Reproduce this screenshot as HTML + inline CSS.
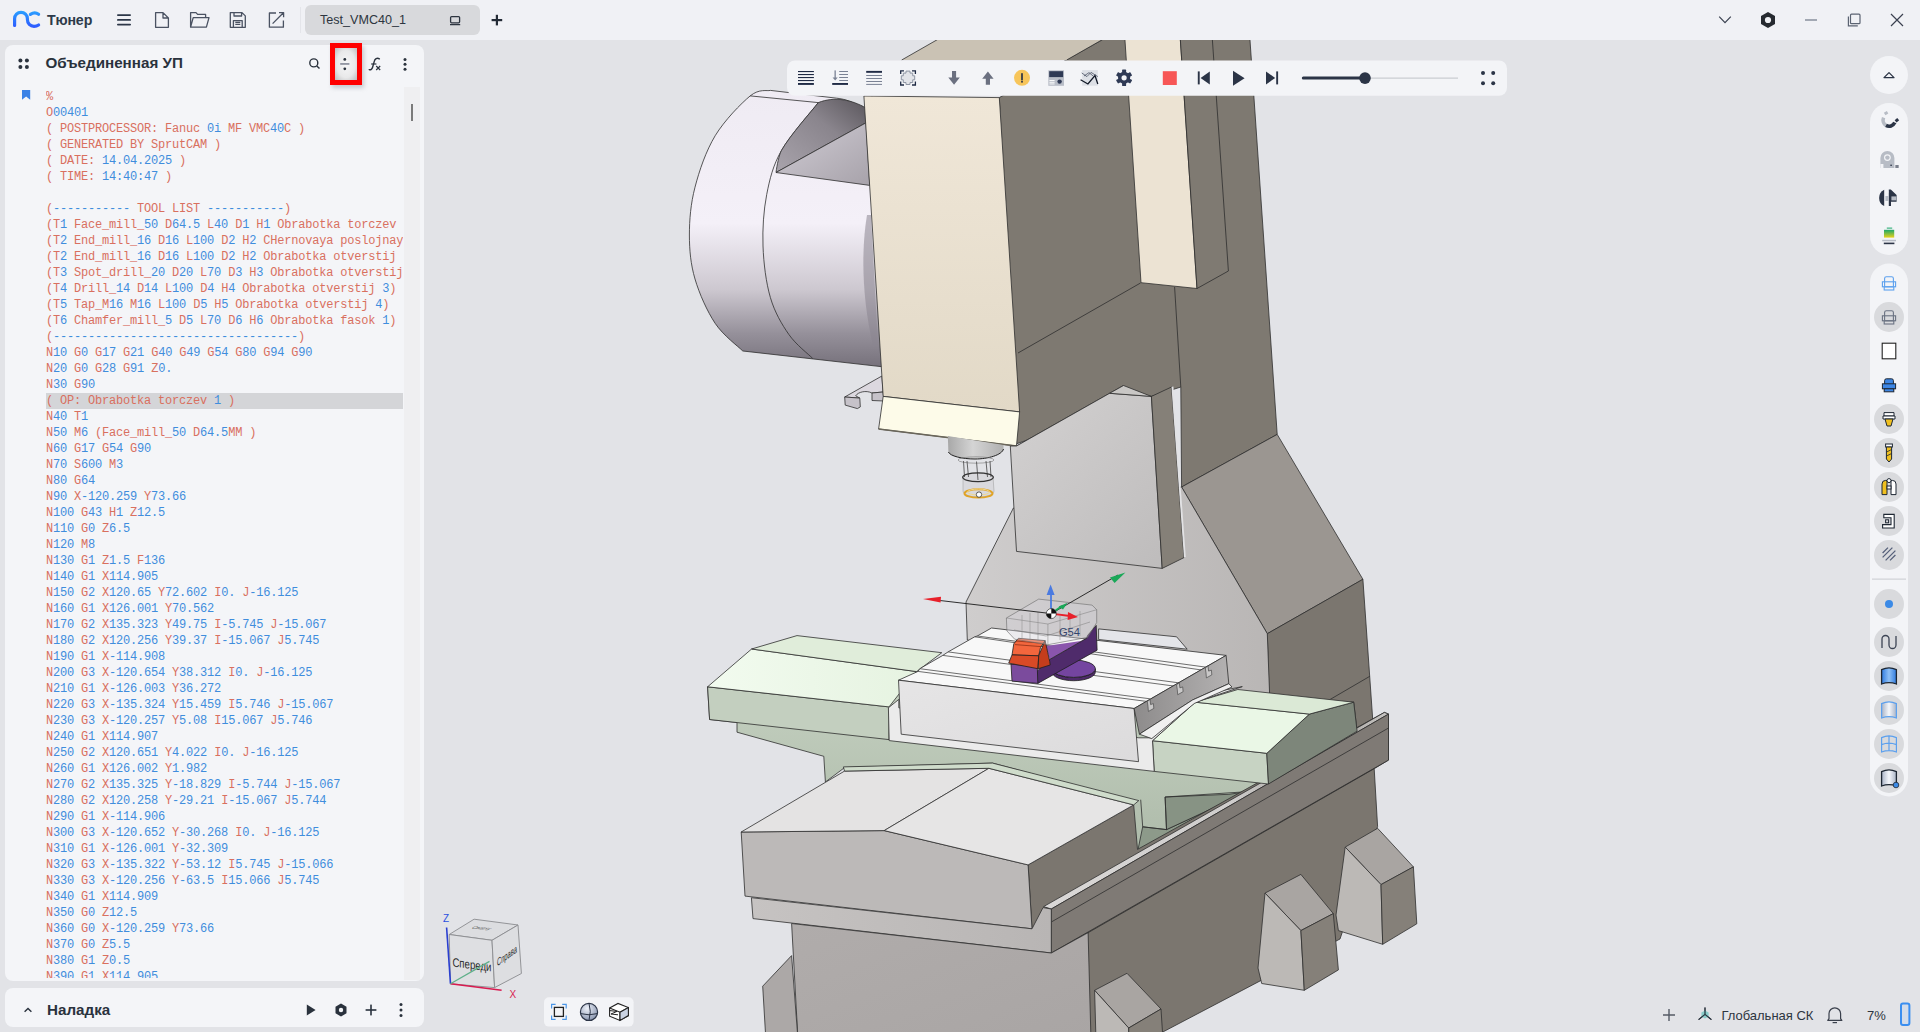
<!DOCTYPE html>
<html><head><meta charset="utf-8">
<style>
*{box-sizing:border-box;margin:0;padding:0}
html,body{width:1920px;height:1032px;overflow:hidden;background:#e2e3e7;font-family:"Liberation Sans",sans-serif;position:relative}
.abs{position:absolute}
#top{left:0;top:0;width:1920px;height:40px;background:#f0f1f5}
#vp{left:0;top:40px;width:1920px;height:992px;background:#e2e3e7;overflow:hidden}
#panel{left:5px;top:45px;width:419px;height:936px;background:#f4f5f8;border-radius:8px;overflow:hidden}
#code{position:absolute;left:41px;top:44px;width:357px;height:889px;overflow:hidden;font-family:"Liberation Mono",monospace;font-size:12px;letter-spacing:-0.2px;line-height:16px;color:#d9705f}
#code div{height:16px;white-space:pre}
#code b{font-weight:normal;color:#3f8ddd}
#code .hl{background:#d4d5d8}
#bot{left:5px;top:988px;width:419px;height:39px;background:#f4f5f8;border-radius:8px}
.title{font-weight:bold;color:#2a323d}
</style></head><body>
<div id="top" class="abs">
<svg class="abs" style="left:0;top:0" width="1920" height="40" viewBox="0 0 1920 40">
<defs><linearGradient id="lg" gradientUnits="userSpaceOnUse" x1="0" y1="11" x2="0" y2="28"><stop offset="0" stop-color="#29a0ff"/><stop offset="1" stop-color="#2e56ff"/></linearGradient></defs>
<g fill="none" stroke="url(#lg)" stroke-width="3.2" stroke-linecap="round">
<path d="M14.6 25.5 V18.7 A6.4 6.4 0 0 1 27.4 18.7 V19.6 A6.6 6.6 0 0 0 34 26.3 C36 26.3 37.4 25.8 38.6 25"/>
<path d="M30.4 14.3 C33 12.7 36.4 12.7 38.6 14.3"/>
</g>
<g fill="#2d3748"><rect x="117" y="14.2" width="14" height="1.8" rx=".9"/><rect x="117" y="19" width="14" height="1.8" rx=".9"/><rect x="117" y="23.7" width="14" height="1.8" rx=".9"/></g>
<g fill="none" stroke="#4a5262" stroke-width="1.3" stroke-linejoin="round">
<path d="M155.6 12.6 H163 L168.4 18 V27.3 H155.6 Z M163 12.6 V18 H168.4"/>
<path d="M190.6 27.2 V12.6 H196 L197.6 14.4 H205.6 V17.2 M190.6 27.2 L193.2 17.6 H209 L206.4 27.2 Z"/>
<path d="M230.3 12.6 H242 L245.3 15.9 V27.3 H230.3 Z M234 12.6 V16 H241.6 V12.6 M233.4 27.3 V20.6 H242.2 V27.3 M235.3 22.4 H240.3 M235.3 24.3 H240.3"/>
<path d="M276 13 H269.4 V27.2 H283.4 V20.4 M272.6 23.6 L283.4 12.8 M279 12.6 H283.6 V17.2"/>
</g>
</svg>
<div class="abs" style="left:47px;top:12px;font-size:14.2px;font-weight:bold;color:#2d3a4a;letter-spacing:-0.1px">Тюнер</div>
<div class="abs" style="left:300px;top:7px;width:1px;height:26px;background:#e4e5ea"></div>
<div class="abs" style="left:305px;top:5px;width:175px;height:30px;background:#d8d9dc;border-radius:6px"></div>
<div class="abs" style="left:320px;top:13px;font-size:12.6px;color:#2d3540">Test_VMC40_1</div>
<svg class="abs" style="left:0;top:0" width="1920" height="40" viewBox="0 0 1920 40">
<g fill="none" stroke="#2d3540" stroke-width="1.3"><rect x="450.6" y="16.6" width="9" height="6.2" rx="1"/><path d="M450 24.6 H460.2"/></g>
<g fill="#232b36"><rect x="491.6" y="19" width="10.6" height="2.2"/><rect x="495.8" y="14.8" width="2.2" height="10.6"/></g>
<path d="M1719.2 16.6 L1725 22.6 L1730.8 16.6" fill="none" stroke="#3a4150" stroke-width="1.2"/>
<path d="M1768 12 L1775 16 V24 L1768 28 L1761 24 V16 Z" fill="#262a30"/><circle cx="1768" cy="20" r="3.1" fill="#f0f1f5"/>
<rect x="1805" y="19.2" width="12" height="1.6" fill="#8f96a3"/>
<g fill="none" stroke="#5b6372" stroke-width="1.2"><rect x="1850.5" y="14.2" width="9.5" height="9.5" rx="1"/><path d="M1848.4 16.4 V25.8 H1857.8"/></g>
<path d="M1891 14 L1903 26 M1903 14 L1891 26" stroke="#3a4150" stroke-width="1.2"/>
</svg>

</div>
<div id="vp" class="abs">
<svg class="abs" style="left:0;top:0" width="1920" height="992" viewBox="0 40 1920 992">
<defs>
<linearGradient id="gmot" gradientUnits="userSpaceOnUse" x1="0" y1="90" x2="0" y2="367"><stop offset="0" stop-color="#efebf3"/><stop offset=".48" stop-color="#f4f0f8"/><stop offset=".72" stop-color="#cdc8d0"/><stop offset=".88" stop-color="#95909a"/><stop offset="1" stop-color="#76717b"/></linearGradient>
<linearGradient id="gtri" x1="0" y1="0" x2="1" y2="1"><stop offset="0" stop-color="#d2ced6"/><stop offset="1" stop-color="#a7a2aa"/></linearGradient>
<linearGradient id="gmot2" x1="0" y1="0" x2="0" y2="1"><stop offset="0" stop-color="#f6f2fa"/><stop offset=".5" stop-color="#ebe7f0"/><stop offset=".85" stop-color="#a29da7"/><stop offset="1" stop-color="#7a7580"/></linearGradient>
<linearGradient id="gwedge" x1="0" y1="1" x2="1" y2="0"><stop offset="0" stop-color="#a9a4ac"/><stop offset=".6" stop-color="#8a858d"/><stop offset="1" stop-color="#5a565c"/></linearGradient>
<linearGradient id="ghead" x1="0" y1="0" x2="0" y2="1"><stop offset="0" stop-color="#f0e7d8"/><stop offset="1" stop-color="#e2d9c7"/></linearGradient>
<linearGradient id="gspin" x1="0" y1="0" x2="1" y2="0"><stop offset="0" stop-color="#a8a8a8"/><stop offset=".45" stop-color="#d4d4d4"/><stop offset="1" stop-color="#b0b0b0"/></linearGradient>
<linearGradient id="gtabf" x1="0" y1="0" x2="1" y2="1"><stop offset="0" stop-color="#e6e5e6"/><stop offset="1" stop-color="#dcdbdc"/></linearGradient>
<linearGradient id="gtabr" x1="0" y1="0" x2="1" y2="0"><stop offset="0" stop-color="#8d8b8b"/><stop offset="1" stop-color="#b3b1b1"/></linearGradient>
<linearGradient id="gund" gradientUnits="userSpaceOnUse" x1="0" y1="690" x2="0" y2="850"><stop offset="0" stop-color="#c3cfbf"/><stop offset="1" stop-color="#aebbaa"/></linearGradient>
<linearGradient id="gstrip" x1="0" y1="0" x2="1" y2="0"><stop offset="0" stop-color="#c6c3c2"/><stop offset="1" stop-color="#b8b5b4"/></linearGradient>
<linearGradient id="gbmain" x1="0" y1="0" x2="1" y2="1"><stop offset="0" stop-color="#b0acab"/><stop offset="1" stop-color="#a9a5a4"/></linearGradient>
<linearGradient id="grailtop" gradientUnits="userSpaceOnUse" x1="1043" y1="0" x2="1388" y2="0"><stop offset="0" stop-color="#dad8d7"/><stop offset=".55" stop-color="#cfcdcc"/><stop offset=".8" stop-color="#9d9994"/><stop offset="1" stop-color="#c8c6c4"/></linearGradient>
<linearGradient id="gram" x1="0" y1="0" x2="1" y2="1"><stop offset="0" stop-color="#d3d1d1"/><stop offset="1" stop-color="#bebcbc"/></linearGradient>
<linearGradient id="gcolf" x1="0" y1="0" x2="1" y2="0"><stop offset="0" stop-color="#cfcdcd"/><stop offset="1" stop-color="#b9b6b5"/></linearGradient>
<linearGradient id="gbasefront" x1="0" y1="0" x2="0" y2="1"><stop offset="0" stop-color="#bdbaba"/><stop offset="1" stop-color="#b1aeae"/></linearGradient>
<linearGradient id="ggreen" x1="0" y1="0" x2="1" y2="0"><stop offset="0" stop-color="#f2fbef"/><stop offset="1" stop-color="#e6f3e1"/></linearGradient>
</defs>
<g stroke="#2e2e2e" stroke-width=".8" stroke-linejoin="round">
<!-- column big dark -->
<path d="M999.3 97.6 L1119.5 30 H1249.3 L1277.2 434.4 L1181.6 487 L1180.8 387 L1151.4 396.4 L1010.3 446 L1016.5 446 Z" fill="#7e7971"/>
<path d="M1016.5 446 L1123.5 385.5" fill="none"/>

<path d="M1018 353 L1140.5 283" fill="none"/>
<path d="M1174.6 287 L1180.8 387" fill="none"/>
<path d="M901.7 60 L954.2 30 H1119.2 L1066.7 60 Z" fill="#cac2b4" stroke="none"/>
<path d="M901.7 60 L954.2 30 M1066.7 60 L1119.2 30" fill="none"/>
<!-- column slope faces -->
<path d="M1181.6 487 L1277.2 434.4 L1362.9 579.3 L1267.3 633.7 Z" fill="#9b9691"/>
<path d="M1267.3 633.7 L1362.9 579.3 L1374.5 745 L1270.6 745 Z" fill="#7b766f"/>
<path d="M1300 717 L1369.8 676.3" fill="none"/>
<!-- column front light -->
<path d="M1013.4 508 L1181.6 487 L1267.3 633.7 L1270.6 720 L967.3 640 L966 602 Z" fill="url(#gcolf)"/>
<!-- rail -->
<path d="M1124.3 30 H1179.7 L1197 288.5 L1141 282.7 Z" fill="#ece3d3"/>
<path d="M1179.7 30 H1211.7 L1228.4 271 L1197 288.5 Z" fill="#7f7a72"/>
<!-- motor -->
<path d="M770.4 90.4 C767.0 91.3 759.4 88.4 750.2 95.9 C741.0 103.5 724.4 120.5 715.2 135.7 C706.0 150.9 699.3 170.6 695.0 187.2 C690.7 203.8 689.4 219.7 689.4 235.0 C689.4 250.3 690.7 264.3 695.0 279.0 C699.3 293.7 707.2 311.4 715.2 323.4 C723.2 335.4 738.2 346.4 742.8 351.0 L882.7 366.8 L872 96 L866 111.8 C855 102 845 99 836.7 98.2 Z" fill="url(#gmot)"/>
<path d="M818.3 102.6 C812.2 110.6 790.1 135.1 781.5 150.4 C772.9 165.7 769.8 178.7 766.7 194.6 C763.6 210.5 762.4 228.8 763.0 246.0 C763.6 263.2 766.1 282.9 770.4 297.6 C774.7 312.3 781.8 324.3 788.8 334.4 C795.8 344.5 808.7 354.4 812.7 358.4" fill="none"/>
<path d="M818.3 102.6 C812.2 110.6 790.1 135.1 781.5 150.4 C779 155 777 165 776 172.5 L866 122.8 L866 108 C852 100 835 96 818.3 102.6 Z" fill="url(#gwedge)"/>
<path d="M776 172.5 L866 122.8 L869.8 185.4 Z" fill="url(#gtri)"/>
<path d="M750.2 95.9 L818.3 102.6" fill="none"/>
<path d="M867 215 C861 250 862 300 873 345 L878 345 L871 215 Z" fill="#8a8590" opacity=".55" stroke="none"/>
<!-- bracket -->
<path d="M844.7 397 L881.9 376 L883 392 L872 393 C866 390 858 392 855.7 395.8 L859.8 398.1 Z" fill="#dcd8df"/>
<path d="M844.7 397 L859.8 398.1 L860.3 406.9 L857.4 408.6 L845.2 405.1 Z" fill="#c6c2c9"/>
<path d="M872 393 L883 392 L884.2 401 L872 400.5 Z" fill="#c6c2c9"/>
<!-- head front -->
<path d="M863.9 96 L999.3 97.6 L1019.6 411.9 L883.2 396.4 Z" fill="url(#ghead)"/>
<path d="M883.2 396.4 L1019.6 411.9 L1016.5 446 L878.6 429 Z" fill="#fdfbe9"/>
<path d="M878.6 429 L1016.5 446" stroke-width="1.6" stroke="#6a665a"/>
<!-- ram -->
<path d="M1010.3 446 L1016.5 446 L1109.6 393.3 L1151.4 396.4 L1162.2 568.4 L1016.5 551.4 Z" fill="url(#gram)"/>
<path d="M1151.4 396.4 L1171.5 387 L1184 557.6 L1162.2 568.4 Z" fill="#858078"/>
<path d="M1109.6 393.3 L1123.5 385.5 L1151.4 396.4 Z" fill="#c9c7c5"/>
<path d="M1171.5 387 L1173.4 386.4 L1185.8 557 L1184 557.6 Z" fill="#e2e2e4" stroke="none"/>

<!-- spindle -->
<path d="M947.8 436 L1003.5 445 L1003.5 449 C1002 455 988 459 975 459 C962 459 950 456 948.4 452 Z" fill="url(#gspin)" stroke="none"/>
<path d="M948.4 452 C950 456 962 459 975 459 C988 459 1002 455 1003.5 449" fill="none" stroke="#222" stroke-width="1"/>
</g>
<path d="M963 477 C963 472 993 472 993 477 L994 491 C994 499 963 499 963 491 Z" fill="#d2d2d6" fill-opacity=".55" stroke="#999" stroke-width=".5"/>
<g fill="none" stroke="#444" stroke-width=".8">
<ellipse cx="976" cy="460" rx="18" ry="3.2" stroke="#777" stroke-width=".6"/>
<path d="M963.5 461 L964.5 477 M967 461 L968.5 477 M976.5 461.5 L978 480 M986 461 L987.5 477 M990 461 L991 477"/>
<ellipse cx="978" cy="477.2" rx="15.3" ry="4.4" stroke="#333" stroke-width="1.3"/>
</g>
<ellipse cx="978.5" cy="493.4" rx="14" ry="4.2" fill="none" stroke="#e0a428" stroke-width="2"/>
<ellipse cx="978.5" cy="492" rx="11" ry="3" fill="none" stroke="#f0d890" stroke-width="1"/>
<circle cx="979" cy="494.6" r="2.7" fill="#fff" stroke="#222" stroke-width=".7"/>

<g stroke="#2e2e2e" stroke-width=".8" stroke-linejoin="round">
<!-- green saddle underside -->
<path d="M707.6 686.8 L1353.7 702.2 L1357.1 731.2 L1248.6 791.6 L1137.5 852 L1132 852 L1132 800.6 L992.5 763.1 L844.7 767.5 L825.4 782 L823.8 756.3 L737 732.2 L737 722.5 L709.6 719.5 Z" fill="url(#gund)"/>
<path d="M1142.7 826.8 L1166.5 829.6 L1248.6 791.6 L1137.5 852 Z" fill="#8d9a8a"/>
<path d="M1165.1 797 L1228.9 794.3 L1248.6 791.6 L1166.5 829.6 Z" fill="#879384"/>
<path d="M1140.7 799.7 L1142.7 826.8 L1166.5 829.6 L1165.1 797 L1248.6 791.6" fill="none"/>
<!-- base: right side big dark -->
<path d="M1028.1 864.9 L1133.7 804.9 L1137.5 849.4 L1384.4 712.4 L1388.5 714.1 L1388.5 760.1 L1374.2 768.7 L1377.6 826.6 L1340 939 L1162.8 1032 L1150 1040 L1088 1040 L1087.7 932.3 L1051.3 953 L1032 928.8 Z" fill="#7b766f"/>
<!-- long rail -->
<path d="M1043.6 906.6 L1384.4 712.4 L1388.5 714.1 L1051.3 909 Z" fill="url(#grailtop)"/>
<path d="M1051.3 909 L1388.5 714.1 L1388.5 760.1 L1051.3 953 Z" fill="#7f7a75"/>
<path d="M1051.3 922 L1388.5 728" fill="none"/>
<path d="M1088.1 932.7 L1374.2 768.7" fill="none"/>
<!-- base front -->
<path d="M741.2 832 L884.2 830.6 L1028.1 864.9 L1032 928.8 L745 896.1 Z" fill="#bcb9b8"/>
<path d="M751.4 897.7 L1032 928.8 L1043 907.6 L1051.3 909 L1051.3 953 L753 918.6 Z" fill="url(#gstrip)"/>
<path d="M791.6 923.5 L1051.3 953 L1088.1 932.7 L1091 1040 L798 1040 Z" fill="url(#gbmain)"/>
<path d="M762.7 986.2 L791.6 955.6 L798 1040 L765.9 1040 Z" fill="#aca8a7"/>
<!-- base top -->
<path d="M741.2 832 L844.5 771.1 L988.9 768.3 L884.2 830.6 Z" fill="#e4e3e3"/>
<path d="M884.2 830.6 L988.9 768.3 L1133.7 804.9 L1028.1 864.9 Z" fill="#e6e5e5"/>
<path d="M843.4 766.9 L992.5 763.1 L1138.8 800.6 L1133.7 804.9 L988.9 768.3 L844.5 771.1 Z" fill="#cfdccb"/>
<!-- feet -->
<path d="M1345.2 847.1 L1377.6 828.3 L1413.4 866.9 L1381 884.6 Z" fill="#a9a5a2"/>
<path d="M1345.2 847.1 L1381 884.6 L1382.7 944.3 L1338.4 930.6 L1336 915 Z" fill="#bcb9b6"/>
<path d="M1381 884.6 L1413.4 866.9 L1416.8 923.8 L1382.7 944.3 Z" fill="#858079"/>
<path d="M1265 893.1 L1300.9 874.4 L1333.3 913.6 L1300.9 930.6 Z" fill="#a9a5a2"/>
<path d="M1265 893.1 L1300.9 930.6 L1304.3 990.3 L1261.7 983.5 L1258 968 Z" fill="#bcb9b6"/>
<path d="M1300.9 930.6 L1333.3 913.6 L1338.4 969.9 L1304.3 990.3 Z" fill="#858079"/>
<path d="M1094.6 990.3 L1127 973.3 L1161 1009 L1128.7 1028 Z" fill="#a9a5a2"/>
<path d="M1094.6 990.3 L1128.7 1028 L1129 1040 L1096 1040 Z" fill="#bcb9b6"/>
<path d="M1128.7 1028 L1161 1009 L1163 1040 L1129 1040 Z" fill="#858079"/>
<!-- left green cover -->
<path d="M707.6 686.8 L889 706.9 L889 739.6 L709.6 719.5 Z" fill="#c3cfbf"/>
<path d="M707.6 686.8 L751.6 649 L916.6 671.6 L889 706.9 Z" fill="url(#ggreen)"/>
<path d="M751.6 649 L797 635.6 L941.8 652.7 L916.6 671.6 Z" fill="#e0edda"/>
<!-- right green cover -->
<path d="M1152.5 740.7 L1266.8 753.3 L1268.5 784 L1154.2 771.4 Z" fill="#c7d3c3"/>
<path d="M1266.8 753.3 L1309.4 714.1 L1353.7 702.2 L1357.1 731.2 L1268.5 784 Z" fill="#7d867a"/>
<path d="M1152.5 740.7 L1195.2 702.2 L1309.4 714.1 L1266.8 753.3 Z" fill="#eaf7e6"/>
<path d="M1195.2 702.2 L1237.8 689.5 L1353.7 702.2 L1309.4 714.1 Z" fill="#dbe9d6"/>
<!-- saddle white U -->
<path d="M888.4 707.8 L898.8 699.4 L898.8 707.8 L1138.8 737.8 L1151.9 737.8 L1180.7 698.8 L1242.3 686.6 L1195.2 702.2 L1152.5 740.7 L1154.2 771.4 L889.2 740.6 Z" fill="#ebebeb"/>
<!-- table -->
<path d="M1098.6 628.9 L1176.6 636.8 L1187.2 649.2 L1098.6 639.5 Z" fill="#e4e5e9"/>
<path d="M898.5 680.2 L918 671.4 L919.8 668.7 L942.8 655.4 L948.1 651.9 L974.7 636.8 L977.3 636 L991.5 628 L1226.1 655.4 L1134.1 708.5 Z" fill="#f8f8f8"/>
<g fill="none" stroke="#4a4a4a" stroke-width=".8">
<path d="M918 671.4 L1147.3 701.5"/><path d="M919.8 668.7 L1150 698.8"/>
<path d="M942.8 655.4 L1176.6 686.4"/><path d="M948.1 651.9 L1180 683"/>
<path d="M974.7 636.8 L1205 670.5"/><path d="M977.3 636 L1208.5 667.5"/>
</g>
<path d="M898.5 680.2 L1134.1 708.5 L1138.5 761.7 L901.2 734.2 Z" fill="url(#gtabf)"/>
<path d="M1134.1 708.5 L1226.1 655.4 L1228.8 683.7 L1192.5 700 L1139.4 734.2 Z" fill="url(#gtabr)"/>
<path d="M1139.4 734.2 L1192.5 700 L1228.8 683.7 L1232 687 L1194.3 703.5 L1151.8 738.6 Z" fill="#f0f0f0"/>
<g fill="#c9c8c8" stroke="#3a3a3a" stroke-width=".6">
<path d="M1147.3 701.5 L1150 699.5 L1150.6 704.6 L1153.4 703.6 L1153.8 708.4 L1148.4 711.4 L1148 706.4 Z"/>
<path d="M1176.6 684.8 L1179.3 682.8 L1179.9 687.9 L1182.7 686.9 L1183.1 691.7 L1177.7 694.7 L1177.3 689.7 Z"/>
<path d="M1205.3 668 L1208 666 L1208.6 671.1 L1211.4 670.1 L1211.8 674.9 L1206.4 677.9 L1206 672.9 Z"/>
</g>

</g>


<g stroke="#1e1e1e" stroke-width=".8" stroke-linejoin="round">
<path d="M1052 668.7 A21.6 8.7 0 0 0 1095.3 668.7 L1095.3 672 A21.6 8.7 0 0 1 1052 672 Z" fill="#4e2a6a"/>
<ellipse cx="1073.7" cy="668.7" rx="21.6" ry="8.7" fill="#7445a0"/>
<path d="M1046 646.1 L1081 641 L1086.6 638.3 L1049.7 659.5 Z" fill="#8a55ac" stroke="none"/>
<path d="M1036.8 671.4 L1049.7 659.5 L1086.6 638.3 L1087.5 635.5 L1096.2 625.4 L1097.1 650.2 L1037.8 683.4 Z" fill="#4f2b6b"/>
<path d="M1011 664.1 L1037.3 666.8 L1037.8 683.4 L1012 681.1 Z" fill="#7b4b9d"/>
<path d="M1018.4 638.3 L1045.1 640.6 L1040.5 647.5 L1038.7 655.8 L1012 654.9 L1013.8 643.8 Z" fill="#f3663d"/>
<path d="M1008.7 663.1 L1012 654.9 L1038.7 655.8 L1037.8 668.7 Z" fill="#d94a27"/>
<path d="M1038.7 655.8 L1045.1 640.6 L1049.7 661.3 L1050.2 665 L1038.2 668.7 Z" fill="#c43d1c"/>
<path d="M1016 641 L1044 643.4 M1015 644.6 L1041 646.6" fill="none" stroke="#6a1e0c" stroke-width=".6"/>
<path d="M1006.4 618 L1038.7 599.1 L1092 605.1 L1096.7 609.7 L1096.7 622.6 L1087.5 637.4 L1047.9 644.7 L1014.7 639.2 L1006.9 630.9 Z" fill="#d8d6dc" fill-opacity=".38" stroke="#6a6a6a" stroke-width=".6"/>
<path d="M1006.4 618 L1047.9 624 L1096.7 609.7 M1047.9 624 V644.7 M1014 630 L1046 636 L1090 622" fill="none" stroke="#7a7a7a" stroke-width=".5"/>
<g fill="none" stroke="#8a8a8a" stroke-width=".5"><path d="M1022 615 V638 M1030 613 V640 M1038 612 V641 M1060 616 V640 M1070 613 V638 M1080 611 V636"/></g>
</g>
<text x="1058.9" y="635.5" font-family="Liberation Sans" font-size="11.2" fill="#33446c">G54</text>
<g stroke="#1a1a1a" stroke-width=".9" fill="none">
<path d="M940 600.5 L1051.3 613.6"/>
<path d="M1051.3 613.6 L1118 575"/>
</g>
<path d="M923 599 L941 596.8 L940.6 602.4 Z" fill="#e8202a"/>
<path d="M1110 577.6 L1125.4 572.4 L1114.6 583 Z" fill="#1aa858"/>
<path d="M1051 613 V593" stroke="#4a7ae0" stroke-width="1.8"/>
<path d="M1046.6 595 L1050.6 584.4 L1054.6 595 Z" fill="#4a7ae0"/>
<path d="M1051.3 613.6 L1070 616" stroke="#e8202a" stroke-width="1.8"/>
<path d="M1068 612 L1078 617 L1067.6 620 Z" fill="#e8202a"/>
<path d="M1051.3 613.6 L1062 606" stroke="#1aa858" stroke-width="1.8"/>
<path d="M1058.6 606.4 L1067.6 602.8 L1063 609.6 Z" fill="#1aa858"/>
<circle cx="1051.3" cy="613.6" r="5" fill="#fff" stroke="#111" stroke-width=".6"/>
<path d="M1051.3 613.6 V608.6 A5 5 0 0 1 1056.3 613.6 Z M1051.3 613.6 V618.6 A5 5 0 0 1 1046.3 613.6 Z" fill="#111"/>

</svg>

</div>
<div id="panel" class="abs">
<svg class="abs" style="left:0;top:0" width="419" height="80" viewBox="5 45 419 80">
<g fill="#2a323d"><circle cx="20.4" cy="60.4" r="2"/><circle cx="26.9" cy="60.4" r="2"/><circle cx="20.4" cy="66.9" r="2"/><circle cx="26.9" cy="66.9" r="2"/></g>
<path d="M22 90 H30.2 V99.8 L26.1 96.6 L22 99.8 Z" fill="#3b82e6"/>
<g fill="none" stroke="#2a323d" stroke-width="1.4"><circle cx="313.8" cy="62.9" r="4"/><path d="M316.8 65.9 L319.5 68.6"/></g>
<rect x="329.5" y="42.5" width="34" height="44" fill="#e4e4e6" opacity="0"/>
</svg>
<div class="abs" style="left:40.5px;top:9px;font-size:15.2px;font-weight:bold;color:#2a323d">Объединенная УП</div>
<div class="abs" style="left:399px;top:42px;width:16px;height:893px;background:#efeff1"></div>
<div class="abs" style="left:406px;top:59px;width:2px;height:17px;background:#7a7a7a"></div>

<div id="code">
<div>%</div>
<div>O<b>00401</b></div>
<div>( POSTPROCESSOR: Fanuc <b>0i </b>MF VMC<b>40</b>C )</div>
<div>( GENERATED BY SprutCAM )</div>
<div>( DATE: <b>14.04.2025 </b>)</div>
<div>( TIME: <b>14:40:47 </b>)</div>
<div>&nbsp;</div>
<div>(<b>----------- </b>TOOL LIST <b>-----------</b>)</div>
<div>(T<b>1 </b>Face_mill_<b>50 </b>D<b>64.5 </b>L<b>40 </b>D<b>1 </b>H<b>1 </b>Obrabotka torczev</div>
<div>(T<b>2 </b>End_mill_<b>16 </b>D<b>16 </b>L<b>100 </b>D<b>2 </b>H<b>2 </b>CHernovaya poslojnay</div>
<div>(T<b>2 </b>End_mill_<b>16 </b>D<b>16 </b>L<b>100 </b>D<b>2 </b>H<b>2 </b>Obrabotka otverstij</div>
<div>(T<b>3 </b>Spot_drill_<b>20 </b>D<b>20 </b>L<b>70 </b>D<b>3 </b>H<b>3 </b>Obrabotka otverstij</div>
<div>(T<b>4 </b>Drill_<b>14 </b>D<b>14 </b>L<b>100 </b>D<b>4 </b>H<b>4 </b>Obrabotka otverstij <b>3</b>)</div>
<div>(T<b>5 </b>Tap_M<b>16 </b>M<b>16 </b>L<b>100 </b>D<b>5 </b>H<b>5 </b>Obrabotka otverstij <b>4</b>)</div>
<div>(T<b>6 </b>Chamfer_mill_<b>5 </b>D<b>5 </b>L<b>70 </b>D<b>6 </b>H<b>6 </b>Obrabotka fasok <b>1</b>)</div>
<div>(<b>-----------------------------------</b>)</div>
<div>N<b>10 </b>G<b>0 </b>G<b>17 </b>G<b>21 </b>G<b>40 </b>G<b>49 </b>G<b>54 </b>G<b>80 </b>G<b>94 </b>G<b>90</b></div>
<div>N<b>20 </b>G<b>0 </b>G<b>28 </b>G<b>91 </b>Z<b>0.</b></div>
<div>N<b>30 </b>G<b>90</b></div>
<div class="hl">( OP: Obrabotka torczev <b>1 </b>)</div>
<div>N<b>40 </b>T<b>1</b></div>
<div>N<b>50 </b>M<b>6 </b>(Face_mill_<b>50 </b>D<b>64.5</b>MM )</div>
<div>N<b>60 </b>G<b>17 </b>G<b>54 </b>G<b>90</b></div>
<div>N<b>70 </b>S<b>600 </b>M<b>3</b></div>
<div>N<b>80 </b>G<b>64</b></div>
<div>N<b>90 </b>X<b>-120.259 </b>Y<b>73.66</b></div>
<div>N<b>100 </b>G<b>43 </b>H<b>1 </b>Z<b>12.5</b></div>
<div>N<b>110 </b>G<b>0 </b>Z<b>6.5</b></div>
<div>N<b>120 </b>M<b>8</b></div>
<div>N<b>130 </b>G<b>1 </b>Z<b>1.5 </b>F<b>136</b></div>
<div>N<b>140 </b>G<b>1 </b>X<b>114.905</b></div>
<div>N<b>150 </b>G<b>2 </b>X<b>120.65 </b>Y<b>72.602 </b>I<b>0. </b>J<b>-16.125</b></div>
<div>N<b>160 </b>G<b>1 </b>X<b>126.001 </b>Y<b>70.562</b></div>
<div>N<b>170 </b>G<b>2 </b>X<b>135.323 </b>Y<b>49.75 </b>I<b>-5.745 </b>J<b>-15.067</b></div>
<div>N<b>180 </b>G<b>2 </b>X<b>120.256 </b>Y<b>39.37 </b>I<b>-15.067 </b>J<b>5.745</b></div>
<div>N<b>190 </b>G<b>1 </b>X<b>-114.908</b></div>
<div>N<b>200 </b>G<b>3 </b>X<b>-120.654 </b>Y<b>38.312 </b>I<b>0. </b>J<b>-16.125</b></div>
<div>N<b>210 </b>G<b>1 </b>X<b>-126.003 </b>Y<b>36.272</b></div>
<div>N<b>220 </b>G<b>3 </b>X<b>-135.324 </b>Y<b>15.459 </b>I<b>5.746 </b>J<b>-15.067</b></div>
<div>N<b>230 </b>G<b>3 </b>X<b>-120.257 </b>Y<b>5.08 </b>I<b>15.067 </b>J<b>5.746</b></div>
<div>N<b>240 </b>G<b>1 </b>X<b>114.907</b></div>
<div>N<b>250 </b>G<b>2 </b>X<b>120.651 </b>Y<b>4.022 </b>I<b>0. </b>J<b>-16.125</b></div>
<div>N<b>260 </b>G<b>1 </b>X<b>126.002 </b>Y<b>1.982</b></div>
<div>N<b>270 </b>G<b>2 </b>X<b>135.325 </b>Y<b>-18.829 </b>I<b>-5.744 </b>J<b>-15.067</b></div>
<div>N<b>280 </b>G<b>2 </b>X<b>120.258 </b>Y<b>-29.21 </b>I<b>-15.067 </b>J<b>5.744</b></div>
<div>N<b>290 </b>G<b>1 </b>X<b>-114.906</b></div>
<div>N<b>300 </b>G<b>3 </b>X<b>-120.652 </b>Y<b>-30.268 </b>I<b>0. </b>J<b>-16.125</b></div>
<div>N<b>310 </b>G<b>1 </b>X<b>-126.001 </b>Y<b>-32.309</b></div>
<div>N<b>320 </b>G<b>3 </b>X<b>-135.322 </b>Y<b>-53.12 </b>I<b>5.745 </b>J<b>-15.066</b></div>
<div>N<b>330 </b>G<b>3 </b>X<b>-120.256 </b>Y<b>-63.5 </b>I<b>15.066 </b>J<b>5.745</b></div>
<div>N<b>340 </b>G<b>1 </b>X<b>114.909</b></div>
<div>N<b>350 </b>G<b>0 </b>Z<b>12.5</b></div>
<div>N<b>360 </b>G<b>0 </b>X<b>-120.259 </b>Y<b>73.66</b></div>
<div>N<b>370 </b>G<b>0 </b>Z<b>5.5</b></div>
<div>N<b>380 </b>G<b>1 </b>Z<b>0.5</b></div>
<div>N<b>390 </b>G<b>1 </b>X<b>114.905</b></div>
</div>
</div>
<div id="bot" class="abs">
<svg class="abs" style="left:0;top:0" width="419" height="39" viewBox="5 988 419 39">
<path d="M24.6 1011.8 L28 1008.4 L31.4 1011.8" fill="none" stroke="#2a323d" stroke-width="1.4"/>
<path d="M306.8 1004.6 L315.6 1010 L306.8 1015.4 Z" fill="#2a323d"/>
<path d="M341 1003.6 L346.5 1006.8 V1013.2 L341 1016.4 L335.5 1013.2 V1006.8 Z" fill="#2a323d"/><circle cx="341" cy="1010" r="2.2" fill="#f4f5f8"/>
<g fill="#2a323d"><rect x="365.6" y="1009.2" width="10.8" height="1.6"/><rect x="370.2" y="1004.6" width="1.6" height="10.8"/></g>
<g fill="#2a323d"><circle cx="401" cy="1004.6" r="1.5"/><circle cx="401" cy="1010" r="1.5"/><circle cx="401" cy="1015.4" r="1.5"/></g>
</svg>
<div class="abs" style="left:42px;top:13px;font-size:15.2px;font-weight:bold;color:#2a323d">Наладка</div>

</div>
<svg class="abs" style="left:0;top:0" width="1920" height="1032" viewBox="0 0 1920 1032">
<defs>
<linearGradient id="gbat" x1="0" y1="0" x2="0" y2="1"><stop offset="0" stop-color="#1aa86a"/><stop offset="1" stop-color="#e8d21a"/></linearGradient>
<radialGradient id="gsph" cx=".4" cy=".3" r=".8"><stop offset="0" stop-color="#eef2fa"/><stop offset="1" stop-color="#7d8aa6"/></radialGradient>
<linearGradient id="gsurf" x1="0" y1="0" x2="1" y2="0"><stop offset="0" stop-color="#2f7be0"/><stop offset=".5" stop-color="#8fc0f5"/><stop offset="1" stop-color="#2f7be0"/></linearGradient>
<linearGradient id="gsurf2" x1="0" y1="0" x2="1" y2="0"><stop offset="0" stop-color="#a9b3c6"/><stop offset=".5" stop-color="#f5f7fb"/><stop offset="1" stop-color="#a9b3c6"/></linearGradient>
<radialGradient id="gpress" cx=".5" cy=".5" r=".7"><stop offset="0" stop-color="#f7f7f8"/><stop offset=".6" stop-color="#e9e9ea"/><stop offset="1" stop-color="#bdbdbf"/></radialGradient>
<filter id="sh" x="-50%" y="-50%" width="200%" height="200%"><feGaussianBlur stdDeviation="2.2"/></filter>
</defs>
<!-- red box with shadow -->
<rect x="332" y="46" width="32" height="42" fill="#9aa0a6" opacity=".5" filter="url(#sh)"/>
<rect x="330" y="43" width="32" height="42" fill="#ff0000"/>
<rect x="335" y="48" width="22" height="32" fill="url(#gpress)"/>
<g fill="#2a323d"><circle cx="344.8" cy="59.4" r="1.4"/><circle cx="344.8" cy="68.8" r="1.4"/></g>
<rect x="340.2" y="63.3" width="9.2" height="1.3" fill="#6a7080"/>
<path d="M379.4 58.8 C377 57.4 374.8 58.8 374.2 61.6 L372.6 67.2 C372 69.2 370.8 70.2 369.2 69.6" fill="none" stroke="#2a323d" stroke-width="1.4" stroke-linecap="round"/><path d="M371.2 64 H376.4" stroke="#2a323d" stroke-width="1.2"/>
<path d="M376.2 66 L380.2 70 M380.2 66 L376.2 70" stroke="#2a323d" stroke-width="1.2"/>
<g fill="#2a323d"><circle cx="405" cy="59.4" r="1.5"/><circle cx="405" cy="64.3" r="1.5"/><circle cx="405" cy="69.2" r="1.5"/></g>

<!-- viewport toolbar -->
<rect x="787" y="60.4" width="720" height="35.4" rx="8" fill="#f3f4f7"/>
<g fill="#1f2a44">
<rect x="798" y="71" width="15.9" height="1.1"/><rect x="798" y="74" width="15.9" height="1.1"/><rect x="798" y="77" width="15.9" height="1.1"/><rect x="798" y="80" width="15.9" height="1.1"/><rect x="798" y="83" width="15.9" height="1.9"/>
<rect x="832.2" y="83" width="15.8" height="1.9"/>
<rect x="866.2" y="70.9" width="15.8" height="1.9"/>
</g>
<g fill="#7a8294">
<rect x="839.2" y="71" width="8.8" height="1"/><rect x="839.2" y="74" width="8.8" height="1"/><rect x="839.2" y="77" width="8.8" height="1"/><rect x="839.2" y="80" width="8.8" height="1"/>
<rect x="834.5" y="70.4" width="1.3" height="7.6"/><path d="M832.6 77.4 L835.15 80.4 L837.7 77.4 Z"/>
<rect x="866.2" y="75" width="15.8" height="1"/><rect x="866.2" y="78" width="15.8" height="1"/><rect x="866.2" y="81" width="15.8" height="1"/><rect x="866.2" y="83.9" width="15.8" height="1"/>
</g>
<g fill="none" stroke="#1f2a44" stroke-width="1.3"><path d="M900.7 74 V70.8 H904 M912 70.8 H915.4 V74 M915.4 81.6 V85 H912 M904 85 H900.7 V81.6"/></g>
<path d="M906.0 71.1 L910.0 71.1 L910.0 73.1 L912.7 73.1 L912.7 75.8 L914.7 75.8 L914.7 79.8 L912.7 79.8 L912.7 82.5 L910.0 82.5 L910.0 84.5 L906.0 84.5 L906.0 82.5 L903.3 82.5 L903.3 79.8 L901.3 79.8 L901.3 75.8 L903.3 75.8 L903.3 73.1 L906.0 73.1 Z" fill="#e2e4e9" stroke="#8e95a3" stroke-width="1"/>
<path d="M952 70.9 H956.1 V77.6 H959.8 L954.05 84.7 L948.3 77.6 H952 Z" fill="#6b7080"/>
<path d="M987.9 71.4 L993.6 78.7 H990 V84.7 H985.8 V78.7 H982.2 Z" fill="#6b7080"/>
<circle cx="1022" cy="77.8" r="8" fill="#f7c55a"/><rect x="1021.2" y="73.2" width="1.6" height="7" fill="#1f2a44"/><rect x="1021.2" y="80.8" width="1.6" height="1.8" fill="#1f2a44"/>
<rect x="1048.3" y="70.3" width="15.7" height="15.5" fill="#b9bec8"/><rect x="1049.2" y="71.2" width="13.9" height="5.9" fill="#2f3a55"/>
<rect x="1049.4" y="80" width="5.2" height=".9" fill="#fff"/><rect x="1049.4" y="81.8" width="5.2" height=".9" fill="#fff"/><rect x="1049.4" y="83.5" width="5.2" height=".9" fill="#fff"/><circle cx="1059.6" cy="81.6" r="2.2" fill="#2f3a55"/>
<rect x="1082.2" y="70.1" width="15.6" height="15.6" fill="#dde0e6"/>
<path d="M1080.6 79.7 L1087.9 84 L1095 75.5 L1097.8 84" fill="none" stroke="#111827" stroke-width="1.3"/>
<path d="M1081.7 72.9 L1086.9 76.6 L1091 72.4 L1097.8 76.6 M1084 76 L1089 72.6 L1093.6 76.4" fill="none" stroke="#3a4254" stroke-width=".7"/>
<g fill="#2f3a55"><rect x="1122.1" y="69.6" width="4" height="3.6" rx=".6" transform="rotate(0 1124.1 77.8)"/><rect x="1122.1" y="69.6" width="4" height="3.6" rx=".6" transform="rotate(60 1124.1 77.8)"/><rect x="1122.1" y="69.6" width="4" height="3.6" rx=".6" transform="rotate(120 1124.1 77.8)"/><rect x="1122.1" y="69.6" width="4" height="3.6" rx=".6" transform="rotate(180 1124.1 77.8)"/><rect x="1122.1" y="69.6" width="4" height="3.6" rx=".6" transform="rotate(240 1124.1 77.8)"/><rect x="1122.1" y="69.6" width="4" height="3.6" rx=".6" transform="rotate(300 1124.1 77.8)"/><circle cx="1124.1" cy="77.8" r="6.1"/></g><circle cx="1124.1" cy="77.8" r="2.6" fill="#f3f4f7"/>
<rect x="1162.8" y="71.2" width="14" height="13.8" fill="#f75656"/>
<rect x="1197.8" y="71.4" width="1.9" height="13" fill="#2b3446"/><path d="M1209.8 71.4 V84.4 L1200.6 77.9 Z" fill="#2b3446"/>
<path d="M1233 70.8 V85.8 L1244.6 78.3 Z" fill="#2b3446"/>
<path d="M1266 71.4 V84.4 L1275.2 77.9 Z" fill="#2b3446"/><rect x="1276.2" y="71.4" width="1.9" height="13" fill="#2b3446"/>
<rect x="1301.8" y="76.6" width="63" height="3" rx="1.5" fill="#2b3446"/>
<rect x="1365" y="77.6" width="93" height="1" fill="#c0c3c9"/>
<circle cx="1365" cy="78.1" r="5.8" fill="#2b3446"/>
<g fill="#2b3446"><circle cx="1483" cy="73" r="2"/><circle cx="1493.2" cy="73" r="2"/><circle cx="1483" cy="83.2" r="2"/><circle cx="1493.2" cy="83.2" r="2"/></g>

<!-- right sidebar -->
<circle cx="1889" cy="75" r="19" fill="#f3f4f7"/>
<path d="M1884 77.6 L1889 72.6 L1894 77.6 Z" fill="none" stroke="#2b3446" stroke-width="1.3" stroke-linejoin="round"/>
<rect x="1870" y="103" width="38" height="152" rx="19" fill="#f3f4f7"/>
<rect x="1870" y="263.5" width="38" height="533" rx="19" fill="#f3f4f7"/>
<!-- magnet -->
<path d="M1883.6 117.6 A6.3 6.3 0 0 0 1886 125.4" fill="none" stroke="#b7bcc5" stroke-width="3.6"/>
<path d="M1886 125.4 A6.3 6.3 0 0 0 1894.8 122.6" fill="none" stroke="#2b3446" stroke-width="3.6"/>
<rect x="1884.4" y="111.6" width="3.4" height="3" transform="rotate(-30 1886.1 113.1)" fill="#b7bcc5"/>
<rect x="1895.2" y="118.8" width="3.4" height="3" transform="rotate(-40 1896.9 120.3)" fill="#2b3446"/>
<!-- tape -->
<path d="M1880.4 168 V158 A7 7 0 0 1 1894.4 158 V168 Z" fill="#b7bcc5"/><circle cx="1887.4" cy="157.6" r="3.4" fill="#f3f4f7"/><circle cx="1887.4" cy="157.6" r="2.2" fill="#b7bcc5"/><rect x="1880.4" y="164" width="3" height="4" fill="#f3f4f7"/><rect x="1890.4" y="164.6" width="1.4" height="1.4" fill="#2b3446"/><rect x="1895.6" y="165" width="1" height="3" fill="#2b3446"/><rect x="1897.4" y="165" width="1" height="3" fill="#2b3446"/>
<!-- caliper -->
<path d="M1884.2 189.8 A9 9 0 0 0 1884.2 206 Z" fill="#2b3446"/><path d="M1888.8 189.6 V206 H1891 V201.8 H1896.6 V195 L1890.8 189.4 Z" fill="#2b3446"/><rect x="1885.4" y="196" width="3.4" height="5" fill="#b7bcc5"/><rect x="1891.4" y="196.4" width="5" height="4" fill="#b7bcc5"/><circle cx="1887" cy="192" r="1.4" fill="#f3f4f7"/>
<!-- battery -->
<rect x="1886.8" y="227.6" width="5.4" height="1" fill="#1aa86a"/><rect x="1884" y="229.8" width="10.2" height="7.8" fill="url(#gbat)"/><rect x="1882.2" y="239.8" width="13.8" height="1.5" fill="#b7bcc5"/><rect x="1883.8" y="242.6" width="10.6" height="1.6" fill="#2b3446"/>
<!-- group 2 circles -->
<g fill="#d9dadd"><circle cx="1889" cy="317" r="15"/><circle cx="1889" cy="419" r="15"/><circle cx="1889" cy="453" r="15"/><circle cx="1889" cy="487" r="15"/><circle cx="1889" cy="521" r="15"/><circle cx="1889" cy="555" r="15"/><circle cx="1889" cy="604" r="15"/><circle cx="1889" cy="642" r="15"/><circle cx="1889" cy="676" r="15"/><circle cx="1889" cy="710" r="15"/><circle cx="1889" cy="744" r="15"/><circle cx="1889" cy="778" r="15"/></g>
<!-- printer blue outline -->
<g fill="none" stroke="#5ca0ee" stroke-width="1.1"><path d="M1884.6 286.4 V278.6 Q1884.6 276.8 1886.4 276.8 H1891.6 Q1893.4 276.8 1893.4 278.6 V286.4"/><rect x="1882.4" y="281.8" width="13.2" height="5"/><rect x="1884.2" y="286.8" width="9.6" height="3.2"/></g>
<g fill="none" stroke="#6a7282" stroke-width="1.1"><path d="M1884.6 320.4 V312.6 Q1884.6 310.8 1886.4 310.8 H1891.6 Q1893.4 310.8 1893.4 312.6 V320.4"/><rect x="1882.4" y="315.8" width="13.2" height="5"/><rect x="1884.2" y="320.8" width="9.6" height="3.2"/></g>
<rect x="1882.2" y="343.2" width="13.6" height="15.6" fill="#fff" stroke="#222" stroke-width="1.1"/>
<path d="M1884.6 390.4 V380.6 Q1884.6 378.8 1886.4 378.8 H1891.6 Q1893.4 378.8 1893.4 380.6 V390.4 Z" fill="#3d86e4" stroke="#1e2733" stroke-width="1"/><rect x="1882.4" y="383.8" width="13.2" height="5" fill="#3d86e4" stroke="#1e2733" stroke-width="1"/><rect x="1884.2" y="388.8" width="9.6" height="3" fill="#3d86e4" stroke="#1e2733" stroke-width="1"/>
<!-- tool icons -->
<path d="M1884 412.6 H1894 V416 H1884 Z" fill="#fff" stroke="#1e2733" stroke-width="1"/><path d="M1883 416 H1895 V419 H1883 Z" fill="#fff" stroke="#1e2733" stroke-width="1"/><path d="M1885 419 H1893 L1891 426 H1887 Z" fill="#f0c020" stroke="#1e2733" stroke-width="1"/>
<rect x="1885.6" y="444" width="6.8" height="3" fill="#fff" stroke="#1e2733" stroke-width="1"/><path d="M1886.4 447 H1891.6 V459 L1889 462 L1886.4 459 Z" fill="#f0c020" stroke="#1e2733" stroke-width="1"/><path d="M1886.6 452 L1891.4 449.6 M1886.6 456 L1891.4 453.6" stroke="#1e2733" stroke-width=".8"/>
<path d="M1882 494.6 V484 Q1882 480.4 1885.6 480.4 H1887 V494.6 Z" fill="#f0c020" stroke="#1e2733" stroke-width="1"/><path d="M1891 494.6 V480.4 H1892.4 Q1896 480.4 1896 484 V494.6 Z" fill="#fff" stroke="#1e2733" stroke-width="1"/><rect x="1887" y="486" width="4" height="3" fill="#fff" stroke="#1e2733" stroke-width="1"/><circle cx="1889" cy="480.6" r="2" fill="#fff" stroke="#1e2733" stroke-width="1"/>
<path d="M1883.8 514.4 H1894.2 V528 H1882.6 V524.6 H1891 V517.8 H1883.8 Z" fill="#fff" stroke="#1e2733" stroke-width="1.1"/><rect x="1885.6" y="519.8" width="3" height="3" fill="none" stroke="#1e2733" stroke-width="1"/>
<g stroke="#56607a" stroke-width="1.3"><path d="M1882.6 553 L1888 547.6 M1882.6 557.4 L1892.4 547.6 M1885.6 560.4 L1895.4 550.6 M1890 560.4 L1895.4 555"/></g>
<rect x="1872" y="578.6" width="34" height="1" fill="#c9cbd0"/>
<circle cx="1889" cy="604" r="4" fill="#3b8ae6"/>
<path d="M1882 648 V639 A3.5 3.5 0 0 1 1889 639 V645 A3.5 3.5 0 0 0 1896 645 V636" fill="none" stroke="#3c4454" stroke-width="1.3"/>
<path d="M1881.6 669.6 Q1889 666 1896.4 669.6 V684 Q1889 681.2 1881.6 684 Z" fill="url(#gsurf)" stroke="#1e2733" stroke-width="1.3"/>
<path d="M1881.6 703.6 Q1889 700 1896.4 703.6 V718 Q1889 715.2 1881.6 718 Z" fill="url(#gsurf2)" stroke="#5ca0ee" stroke-width="1.2"/>
<path d="M1881.6 737.6 Q1889 734 1896.4 737.6 V752 Q1889 749.2 1881.6 752 Z M1889 735.6 V750.4 M1881.6 744.6 Q1889 741.6 1896.4 744.6" fill="none" stroke="#5ca0ee" stroke-width="1.2"/>
<path d="M1881.6 771.6 Q1889 768 1896.4 771.6 V786 Q1889 783.2 1881.6 786 Z" fill="url(#gsurf2)" stroke="#1e2733" stroke-width="1.3"/><circle cx="1896" cy="785" r="2.8" fill="#3b8ae6" stroke="#1e2733" stroke-width=".8"/>

<!-- view cube -->
<path d="M449.2 934.5 L474.1 919.2 L518 925 L492 940.3 Z" fill="#dcdde0" stroke="#8a8b8e" stroke-width=".9"/>
<path d="M449.2 934.5 L492 940.3 L494.6 987.6 L450.5 983.8 Z" fill="#dedfe2" stroke="#8a8b8e" stroke-width=".9"/>
<path d="M492 940.3 L518 925 L521.4 973.5 L494.6 987.6 Z" fill="#dddee1" stroke="#8a8b8e" stroke-width=".9"/>
<text x="0" y="0" transform="translate(452.4 966.4) skewY(7.5)" font-family="Liberation Sans" font-size="12.4" fill="#2a2a2a" textLength="39" lengthAdjust="spacingAndGlyphs">Спереди</text>
<text x="0" y="0" transform="translate(497 966.6) skewY(-36)" font-family="Liberation Sans" font-size="11" fill="#2a2a2a" textLength="20" lengthAdjust="spacingAndGlyphs">Справа</text>
<text x="0" y="0" transform="translate(471 928.4) skewX(-50) scale(1 .45) rotate(10)" font-family="Liberation Sans" font-size="8" fill="#555" textLength="20" lengthAdjust="spacingAndGlyphs">Сверху</text>
<path d="M450.5 983.8 L446.6 927.5" stroke="#2a3fd0" stroke-width="1.6"/>
<path d="M450.5 983.8 L501.6 990.2" stroke="#d81b50" stroke-width="1.6"/>
<path d="M450.5 983.8 L489.5 961.4" stroke="#5fb08a" stroke-width="1.3"/>
<text x="443" y="922" font-family="Liberation Sans" font-size="10" fill="#2a50e0">Z</text>
<text x="509.6" y="997.6" font-family="Liberation Sans" font-size="10" fill="#d81b50">X</text>
<!-- bottom view buttons -->
<rect x="544" y="997.2" width="89.6" height="29.4" rx="5" fill="#f3f4f7"/>
<g fill="none" stroke="#4a96e8" stroke-width="1.2"><path d="M551.6 1008.4 V1004.4 H555.6 M562.2 1004.4 H566.2 V1008.4 M566.2 1015.4 V1019.4 H562.2 M555.6 1019.4 H551.6 V1015.4"/></g>
<rect x="554.4" y="1007.4" width="9" height="9" fill="none" stroke="#222" stroke-width="1.3"/>
<circle cx="589" cy="1011.9" r="8.6" fill="url(#gsph)" stroke="#2b3446" stroke-width="1.2"/>
<path d="M580.6 1013.6 Q589 1016 597.4 1013.6 M589 1003.4 Q591.6 1011 589 1020.5" fill="none" stroke="#2b3446" stroke-width="1"/>
<path d="M609.6 1008 L618 1003.4 L628.4 1007.6 V1015.6 L620 1020.4 L609.6 1016.2 Z" fill="#fff" stroke="#222" stroke-width="1.1"/>
<path d="M609.6 1008 L620 1012.2 L628.4 1007.6 M620 1012.2 V1020.4" fill="none" stroke="#222" stroke-width="1.1"/>
<path d="M620 1012.2 L628.4 1007.6 V1015.6 L620 1020.4 Z" fill="#c9d2e2" stroke="#222" stroke-width="1.1"/>
<path d="M609.6 1010.6 L617 1011.4 L611 1014 L618 1014.8" fill="none" stroke="#222" stroke-width="1"/>

<!-- status bar -->
<path d="M1663 1015 H1675 M1669 1009 V1021" stroke="#555b66" stroke-width="1.4"/>
<g stroke="#2d3540" stroke-width="1.1" fill="none"><path d="M1705 1007.6 V1014.4 M1705 1014.4 L1698.6 1019.6 M1705 1014.4 L1711.4 1019.6"/></g>
<path d="M1705 1010.6 L1708.6 1012.6 V1016.6 L1705 1018.6 L1701.4 1016.6 V1012.6 Z" fill="#6cc4c0" opacity=".75"/>
<path d="M1705 1007.6 V1014.4 M1705 1014.4 L1698.6 1019.6 M1705 1014.4 L1711.4 1019.6" stroke="#2d3540" stroke-width="1.1"/>
<text x="1721.4" y="1020.2" font-family="Liberation Sans" font-size="13" fill="#2d3540">Глобальная СК</text>
<path d="M1829 1018.6 V1013.6 A5.8 5.8 0 0 1 1840.6 1013.6 V1018.6 L1841.8 1020.4 H1827.8 Z" fill="none" stroke="#3a404c" stroke-width="1.2" stroke-linejoin="round"/><path d="M1832.6 1022.6 H1837" stroke="#3a404c" stroke-width="1.2"/>
<text x="1867" y="1020.2" font-family="Liberation Sans" font-size="13" fill="#2d3540">7%</text>
<rect x="1901" y="1003.6" width="8.4" height="21.4" rx="2" fill="#d3dcea" stroke="#3a8ef0" stroke-width="2"/>
</svg>

</body></html>
